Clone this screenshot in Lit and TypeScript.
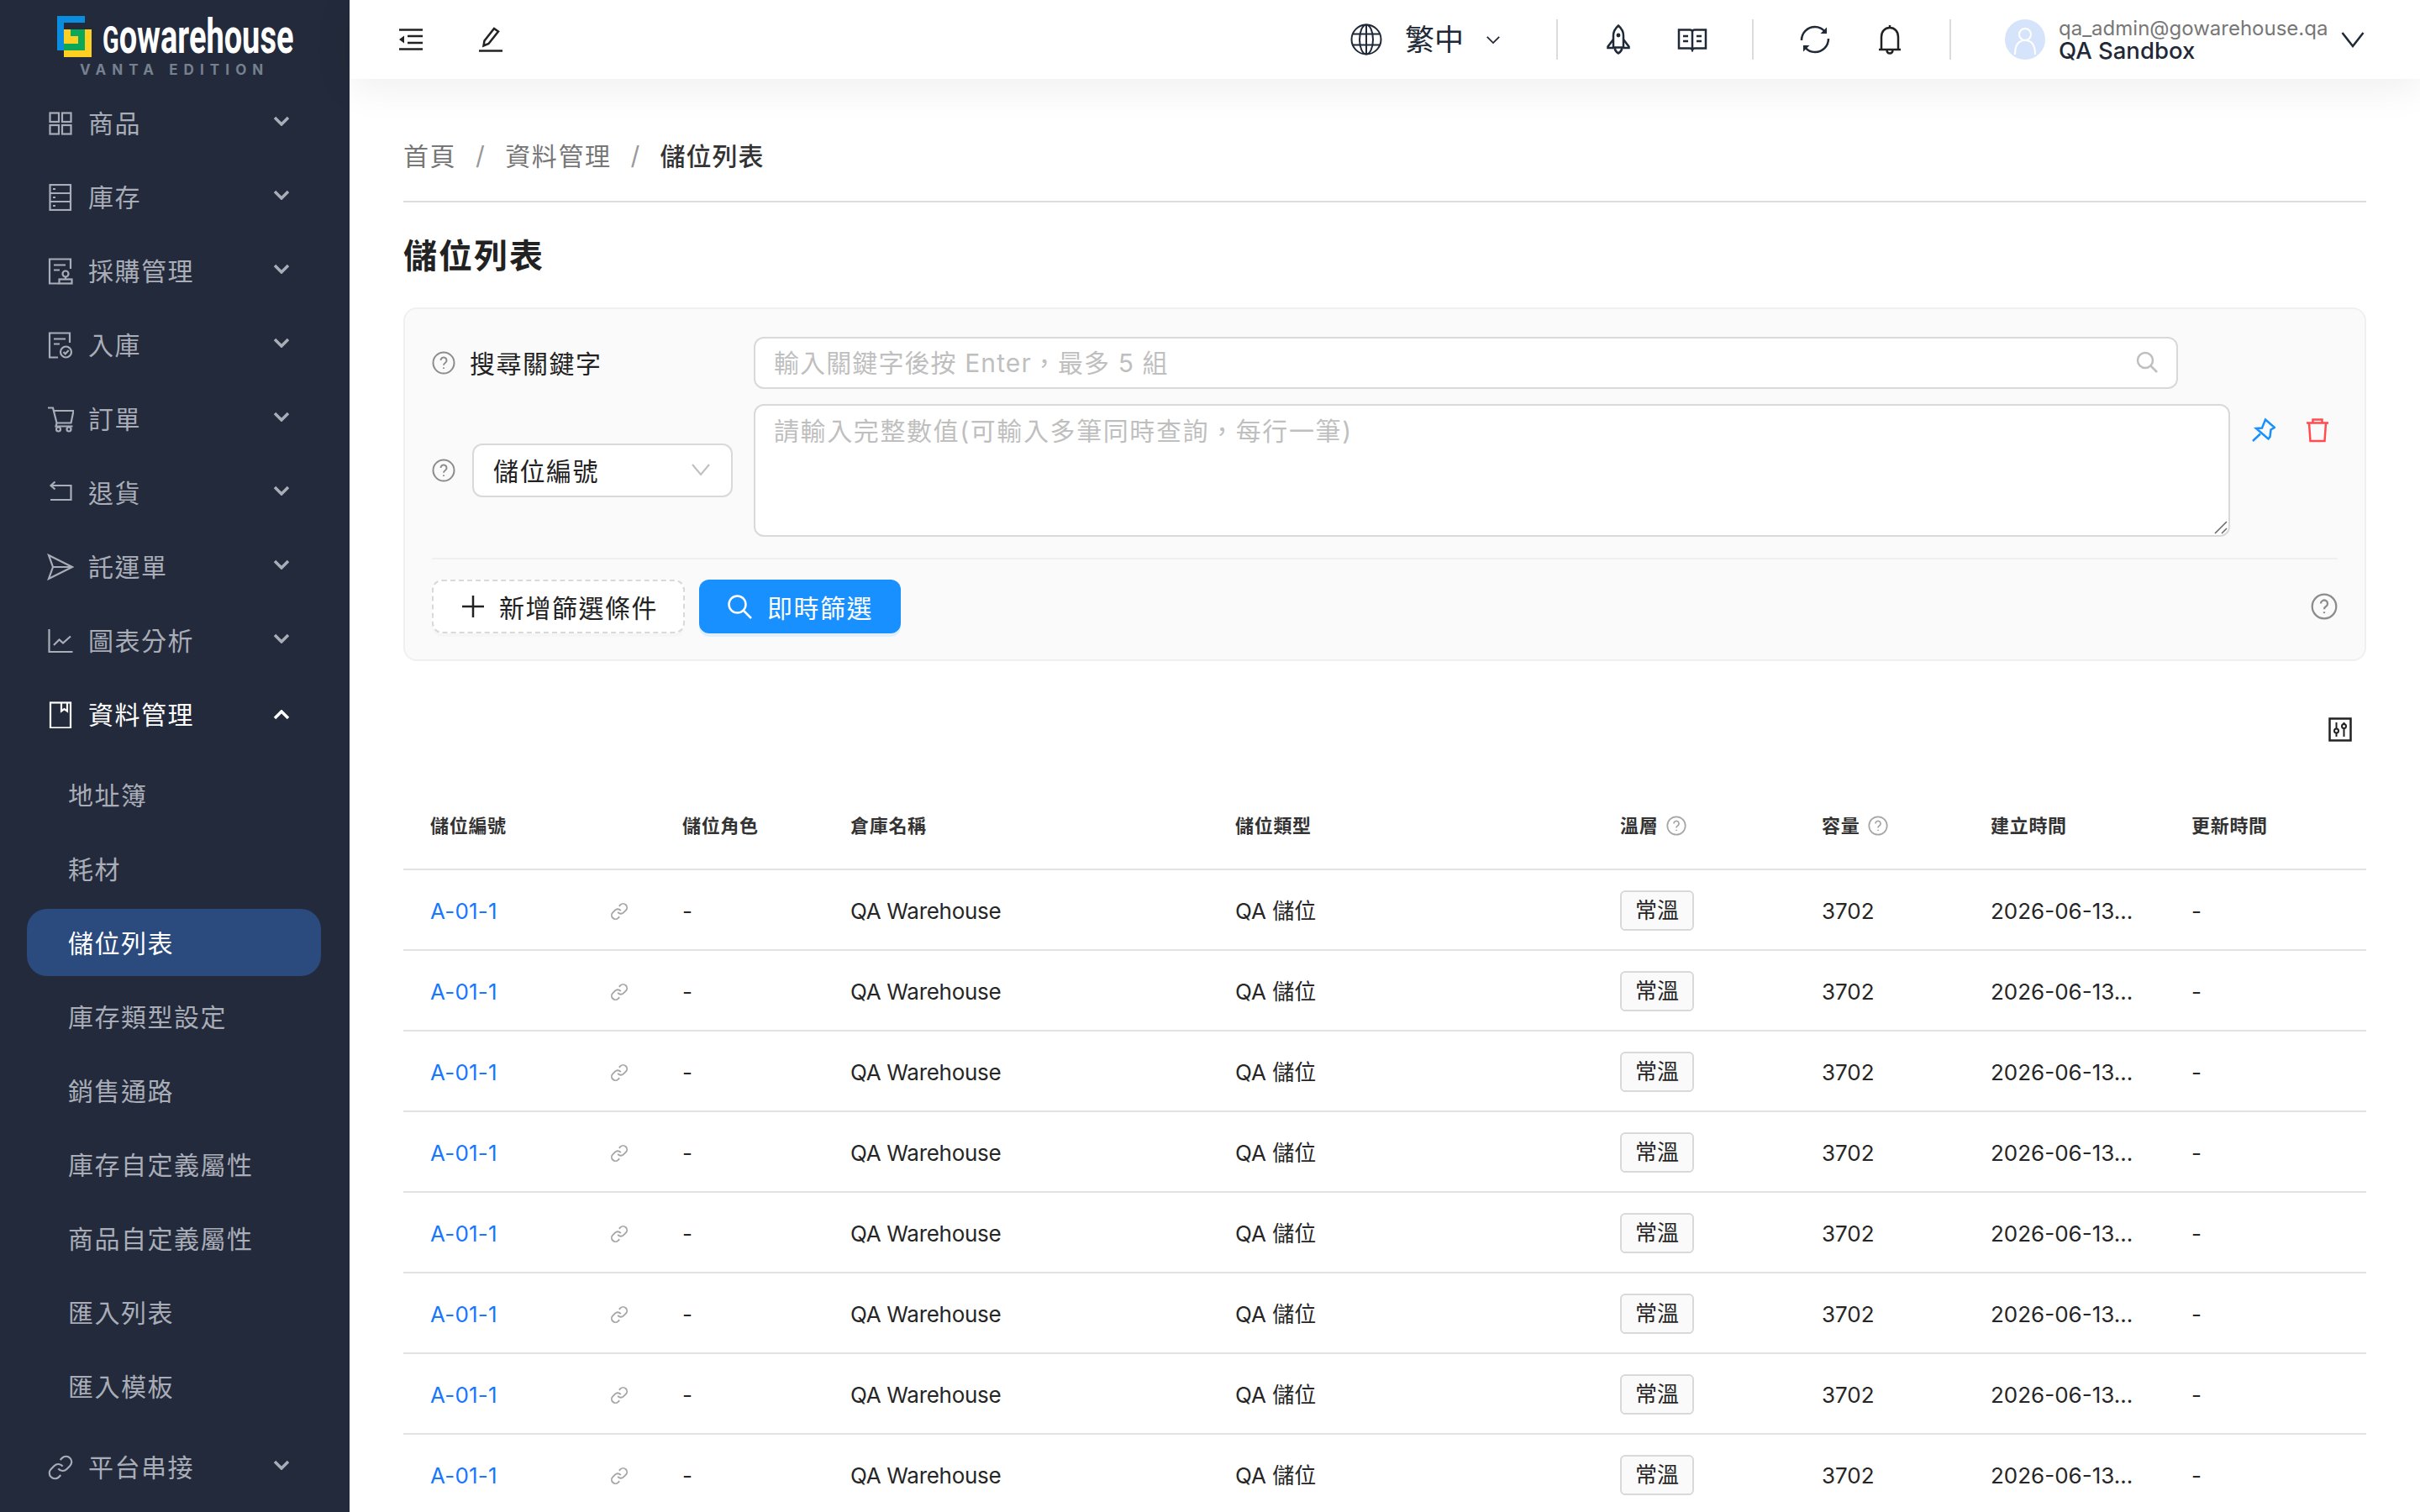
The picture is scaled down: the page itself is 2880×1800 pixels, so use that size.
import { LitElement, css, html, svg } from 'lit'
import { customElement } from 'lit/decorators.js'

// sidebar + header icons, all stroked with currentColor
const linkPaths = svg`<path d="M10 13a5 5 0 0 0 7.54.54l3-3a5 5 0 0 0-7.07-7.07l-1.72 1.71"/><path d="M14 11a5 5 0 0 0-7.54-.54l-3 3a5 5 0 0 0 7.07 7.07l1.71-1.71"/>`

const menuIcons: Record<string, unknown> = {
    grid: svg`<rect x="3.5" y="3.5" width="10.5" height="10.5"/><rect x="18" y="3.5" width="10.5" height="10.5"/><rect x="3.5" y="18" width="10.5" height="10.5"/><rect x="18" y="18" width="10.5" height="10.5"/>`,
    server: svg`<rect x="3.5" y="1" width="24.5" height="30"/><path d="M3.5 11h24.5M3.5 21h24.5M7 6h3M7 16h3M7 26h3"/>`,
    purchase: svg`<path d="M28 13V1.5H3v29h11M8 8.5h14M8 14.5h7"/><circle cx="22" cy="19" r="3.5"/><path d="M22 22.5v3"/><rect x="14.5" y="25.5" width="15" height="5"/>`,
    inbound: svg`<path d="M27 13V1.5H3v29h10M8 8.5h14M8 14.5h7"/><circle cx="22.5" cy="24" r="6.5"/><path d="M19.5 24l2.2 2.3 4-4.3"/>`,
    cart: svg`<path d="M1 2.5h6l4.5 18h17l3-14.5H8.5M11.5 20.5l-1 4h20"/><circle cx="13.5" cy="28" r="2.5"/><circle cx="26" cy="28" r="2.5"/>`,
    back: svg`<path d="M9.5 2.5L4.5 7l5 4.500M4.500 7h24v17H4"/>`,
    send: svg`<path d="M2 2l28 14L2 30l5-14zM7 16h23"/>`,
    chart: svg`<path d="M2.500 2v27h28M8 21l6.500-6.500 4.500 4 9-8"/>`,
    book: svg`<rect x="4" y="1.500" width="24" height="30"/><path d="M17 1.500v10l3.500-2.500 3.500 2.500v-10"/>`,
    link: svg`<g transform="scale(1.333)" stroke-width="1.600">${linkPaths}</g>`,
}

const help = html`<svg class="help" viewBox="0 0 28 28"><circle cx="14" cy="14" r="12.500"/><path d="M10.500 11a3.500 3.500 0 1 1 5.300 3c-1.100.7-1.800 1.400-1.800 2.800"/><path d="M14 19.500v1.600"/></svg>`
const chevDown = svg`<path d="M2 2l8 8 8-8"/>`

interface MenuItem { label: string; icon: string; open?: boolean; }

const menu: MenuItem[] = [
    { label: '商品', icon: 'grid' },
    { label: '庫存', icon: 'server' },
    { label: '採購管理', icon: 'purchase' },
    { label: '入庫', icon: 'inbound' },
    { label: '訂單', icon: 'cart' },
    { label: '退貨', icon: 'back' },
    { label: '託運單', icon: 'send' },
    { label: '圖表分析', icon: 'chart' },
    { label: '資料管理', icon: 'book', open: true },
    { label: '平台串接', icon: 'link' },
]

const subMenu = ['地址簿', '耗材', '儲位列表', '庫存類型設定', '銷售通路', '庫存自定義屬性', '商品自定義屬性', '匯入列表', '匯入模板']

const rows = [0, 1, 2, 3, 4, 5, 6, 7]

@customElement('app-root')
export class AppRoot extends LitElement {
    static styles = css`
        :host {
            display: grid;
            grid-template-columns: 416px 1fr;
            width: 2880px;
            height: 1800px;
            overflow: hidden;
            background: #fff;
            font-family: Inter, "Noto Sans CJK TC", sans-serif;
            color: #222;
        }

        svg {
            display: block;
            fill: none;
            stroke: currentColor;
            flex: none;
        }

        /* sidebar */
        .side {
            background: #232a3b;
            color: #a9adb7;
            font-size: 30px;
            letter-spacing: 1.5px;
            overflow: hidden;
        }
        .logo {
            height: 107px;
            box-sizing: border-box;
            padding: 19px 0 0 68px;
        }
        .logoRow {
            display: flex;
            gap: 13px;
        }
        .word {
            width: 226px;
            height: 49px;
            margin-top: 4px;
            color: #fff;
            font-family: Roboto, sans-serif;
            font-weight: 700;
            font-size: 58px;
            line-height: 40px;
            letter-spacing: 0;
            white-space: nowrap;
            transform: scaleX(0.655);
            transform-origin: left top;
        }
        .word span {
            font-size: 44px;
        }
        .edition {
            margin: 1px 0 0 27px;
            font-size: 17px;
            line-height: 20px;
            font-weight: 700;
            letter-spacing: 7.1px;
            color: #76818f;
            white-space: nowrap;
        }
        .item {
            display: flex;
            align-items: center;
            height: 80px;
            margin: 0 34px 8px 32px;
            padding: 0 37px 0 24px;
        }
        .item .ic {
            width: 32px;
            height: 32px;
            stroke-width: 2.200;
            margin-right: 17px;
        }
        .item .label { flex: 1; padding-bottom: 4px; }
        .item .chev {
            width: 20px;
            height: 12px;
            stroke-width: 3.500;
            margin-top: -6px;
        }
        .item.open { color: #fff; }
        .item.open .chev { transform: rotate(180deg); margin-top: 0; }
        .subs { margin-top: 15px; padding-bottom: 9px; }
        .sub {
            display: flex;
            align-items: center;
            box-sizing: border-box;
            height: 80px;
            margin: 0 34px 8px 32px;
            padding: 0 0 2px 49px;
            border-radius: 24px;
        }
        .sub.on { background: #2b4a7e; color: #fff; }

        /* top bar */
        .main { min-width: 0; }
        .top {
            display: flex;
            align-items: center;
            height: 94px;
            padding: 0 66px 0 58px;
            background: #fff;
            position: relative;
            box-shadow: 0 10px 48px rgba(0, 0, 0, 0.07);
            color: #1f2937;
        }
        .top .outdent { width: 30px; height: 28px; color: #222; }
        .top .pen { width: 30px; height: 30px; margin-left: 65px; color: #222; }
        .spacer { flex: 1; }
        .globe { width: 38px; height: 38px; stroke-width: 2; }
        .lang {
            margin-left: 27px;
            font-size: 35px;
            line-height: 48px;
        }
        .smallChev { width: 18px; height: 11px; margin-left: 26px; stroke-width: 2; }
        .sep {
            width: 2px;
            height: 48px;
            background: #dcdcdc;
        }
        .sep.a { margin-left: 66px; }
        .sep.b { margin-left: 53px; }
        .sep.c { margin-left: 57px; }
        .rocket { width: 30px; height: 36px; margin-left: 57px; stroke-width: 2.500; }
        .openbook { width: 36px; height: 30px; margin-left: 55px; stroke-width: 2.500; }
        .sync { width: 36px; height: 36px; margin-left: 55px; stroke-width: 2.500; }
        .bell { width: 28px; height: 36px; margin-left: 57px; stroke-width: 2.500; color: #222; }
        .avatar {
            width: 48px;
            height: 48px;
            margin-left: 64px;
            border-radius: 50%;
            background: #d6e4fb;
            color: #fff;
            stroke-width: 2;
        }
        .who { margin-left: 16px; width: 336px; }
        .email {
            font-size: 24px;
            line-height: 26px;
            color: #777;
            white-space: nowrap;
        }
        .name {
            font-size: 27.500px;
            line-height: 26px;
            font-weight: 500;
            color: #1f2937;
        }
        .bigChev { width: 28px; height: 20px; stroke-width: 2.500; }

        /* page */
        .content { padding: 64px 64px 0; }
        .crumbs {
            display: flex;
            align-items: center;
            height: 54px;
            padding-bottom: 27px;
            border-bottom: 2px solid #ddd;
            font-size: 30px;
            letter-spacing: 1.6px;
            color: #777;
        }
        .crumbs span, .crumbs b { padding-bottom: 2px; }
        .crumbs i {
            font-style: normal;
            color: #999;
            width: 58px;
            text-align: center;
        }
        .crumbs b { font-weight: 500; color: #333; letter-spacing: 1px; }
        h1 {
            margin: 36px 0 33px;
            font-size: 40px;
            line-height: 56px;
            letter-spacing: 2px;
            font-weight: 700;
            color: #222;
        }

        /* filter card */
        .card {
            height: 421px;
            box-sizing: border-box;
            padding: 33px 32px 0;
            border: 2px solid #f0f0f0;
            border-radius: 16px;
            background: #fafafa;
            font-size: 30px;
            letter-spacing: 1.5px;
        }
        .line {
            display: flex;
            align-items: center;
        }
        .left {
            display: flex;
            align-items: center;
            width: 383px;
            flex: none;
        }
        .help {
            width: 28px;
            height: 28px;
            color: #8c8c8c;
            stroke-width: 2;
        }
        .left .kw { margin-left: 17px; padding-bottom: 2px; }
        input, textarea {
            box-sizing: border-box;
            border: 2px solid #d9d9d9;
            background: #fff;
            font: inherit;
            color: #222;
            outline: none;
        }
        input::placeholder, textarea::placeholder { color: #bfbfbf; opacity: 1; }
        .searchBox {
            position: relative;
            width: 1695px;
            height: 62px;
        }
        .searchBox input {
            width: 100%;
            height: 100%;
            padding: 0 60px 0 22px;
            border-radius: 12px;
            letter-spacing: 1.1px;
        }
        .searchBox svg {
            position: absolute;
            right: 24px;
            top: 17px;
            width: 26px;
            height: 26px;
            color: #bfbfbf;
            stroke-width: 2.500;
        }
        .line.two { margin-top: 18px; }
        .pick {
            display: flex;
            align-items: center;
            justify-content: space-between;
            box-sizing: border-box;
            width: 310px;
            height: 64px;
            margin-left: 20px;
            padding: 0 24px 2px 23px;
            border: 2px solid #d9d9d9;
            border-radius: 12px;
            background: #fff;
        }
        .pick svg { width: 24px; height: 16px; color: #bfbfbf; stroke-width: 2; }
        .taBox {
            position: relative;
            width: 1757px;
            height: 158px;
        }
        textarea {
            display: block;
            width: 100%;
            height: 100%;
            padding: 12px 22px;
            border-radius: 12px;
            line-height: 36px;
            letter-spacing: 1.6px;
            resize: none;
        }
        .grip {
            position: absolute;
            right: 3px;
            bottom: 3px;
            width: 16px;
            height: 16px;
            color: #666;
            stroke-width: 1.500;
        }
        .acts {
            align-self: flex-start;
            display: flex;
            gap: 36px;
            margin: 16px 0 0 26px;
        }
        .pin { width: 28px; height: 30px; color: #1890ff; stroke-width: 2.500; }
        .trash { width: 28px; height: 30px; color: #ff4d4f; stroke-width: 2.500; }
        .rule {
            height: 2px;
            margin: 25px 0 24px;
            background: #f0f0f0;
        }
        .btns {
            display: flex;
            align-items: center;
            gap: 17px;
        }
        .btn {
            display: flex;
            align-items: center;
            box-sizing: border-box;
            height: 64px;
            padding-bottom: 1px;
            border-radius: 12px;
        }
        .btn.add {
            width: 301px;
            padding-left: 33px;
            border: 2px dashed #d9d9d9;
            background: #fff;
            box-shadow: 0 4px 0 rgba(0, 0, 0, 0.015);
        }
        .btn.add svg { width: 28px; height: 28px; margin-right: 17px; stroke-width: 2.500; }
        .btn.go {
            width: 240px;
            padding-left: 33px;
            background: #1890ff;
            color: #fff;
            box-shadow: 0 4px 0 rgba(5, 145, 255, 0.1);
        }
        .btn.go svg { width: 30px; height: 30px; margin-right: 18px; stroke-width: 2.500; }
        .helpBig { width: 32px; height: 32px; margin-left: auto; }

        /* table */
        .tools {
            display: flex;
            justify-content: flex-end;
            height: 145px;
            box-sizing: border-box;
            padding: 67px 17px 0 0;
        }
        .tools svg { width: 28px; height: 29px; color: #222; stroke-width: 2.500; }
        .row {
            display: grid;
            grid-template-columns: 300px 200px 458px 458px 240px 201px 239px 240px;
            align-items: center;
            box-sizing: border-box;
            border-bottom: 2px solid #e2e2e2;
            height: 96px;
            font-size: 26px;
            line-height: 30px;
            color: #262626;
        }
        .row > div {
            display: flex;
            align-items: center;
            padding: 3px 0 0 32px;
            white-space: pre;
        }
        .row > div.tagCell { padding-top: 1px; }
        .row.head {
            height: 104px;
            font-size: 22px;
            letter-spacing: 0.7px;
            font-weight: 600;
            color: #333;
        }
        .row.head > div { padding: 0 0 1px 32px; }
        .row .first { justify-content: space-between; padding-right: 32px !important; }
        .code { color: #1677ff; letter-spacing: 0.200px; }
        .wh { letter-spacing: -0.300px; }
        .chain { width: 22px; height: 22px; color: #a6a6a6; stroke-width: 2; }
        .tag {
            display: flex;
            align-items: center;
            justify-content: center;
            box-sizing: border-box;
            width: 88px;
            height: 48px;
            border: 2px solid #d9d9d9;
            border-radius: 6px;
            background: #fafafa;
        }
        .head .help { width: 24px; height: 24px; margin-left: 10px; color: #a6a6a6; stroke-width: 2; }
    `;

    private menuItem(m: MenuItem) {
        return html`<div class="item ${m.open ? 'open' : ''}">
            <svg class="ic" viewBox="0 0 32 32">${menuIcons[m.icon]}</svg>
            <span class="label">${m.label}</span>
            <svg class="chev" viewBox="0 0 20 12">${chevDown}</svg>
        </div>`;
    }

    private sidebar() {
        return html`<aside class="side">
            <div class="logo">
                <div class="logoRow">
                    <svg width="41" height="49" viewBox="0 0 41 49" style="stroke:none">
                        <path fill="#0a8ddf" d="M0 0h33v8H8v33H0z"/>
                        <path fill="#fdd023" d="M8 16h33v33H8z"/>
                        <path fill="#0aa858" d="M16 16h17v25H8v-8h17V24h-9z"/>
                        <path fill="#fdd023" d="M8 16h8v8h9v9H8z"/>
                    </svg>
                    <div class="word"><span>G</span>owarehouse</div>
                </div>
                <div class="edition">VANTA EDITION</div>
            </div>
            ${menu.map(m => html`
                ${this.menuItem(m)}
                ${m.open ? html`<div class="subs">${subMenu.map(s => html`<div class="sub ${s == '儲位列表' ? 'on' : ''}">${s}</div>`)}</div>` : ''}
            `)}
        </aside>`;
    }

    private topbar() {
        return html`<header class="top">
            <svg class="outdent" viewBox="0 0 30 28" stroke-width="2.500"><path d="M1 2.500h28M1 25.500h28M11 10h18M11 18h18"/><path d="M7 9.500v9l-6-4.500z" fill="currentColor" stroke="none"/></svg>
            <svg class="pen" viewBox="0 0 30 30" stroke-width="2.500"><path d="M1 28.500h28"/><path d="M6.500 22.500l1-6L19 2l5 3.500-11.500 14.500z"/></svg>
            <div class="spacer"></div>
            <svg class="globe" viewBox="0 0 38 38"><circle cx="19" cy="19" r="17.500"/><ellipse cx="19" cy="19" rx="8" ry="17.500"/><path d="M19 1.500v35M2 12.500h34M2 25.500h34"/></svg>
            <span class="lang">繁中</span>
            <svg class="smallChev" viewBox="0 0 20 12">${chevDown}</svg>
            <div class="sep a"></div>
            <svg class="rocket" viewBox="0 0 30 36"><path d="M15 1.500c4 3.500 6 7 6 12v14H9v-14c0-5 2-8.500 6-12z"/><path d="M9 18l-6.500 8.500v1.500H9M21 18l6.500 8.500v1.500H21M10.500 28c.5 3 2 5 4.500 6.500 2.500-1.500 4-3.500 4.500-6.500"/><circle cx="15" cy="13" r="1.200" fill="currentColor"/></svg>
            <svg class="openbook" viewBox="0 0 36 30"><path d="M2 3.500h13c1.800 0 3 1 3 2.500 0-1.500 1.200-2.500 3-2.500h13v22H21c-1.500 0-2.500.7-3 2-.5-1.300-1.500-2-3-2H2zM18 6v21M7 11h6M7 17h6M23 11h6M23 17h6"/></svg>
            <div class="sep b"></div>
            <svg class="sync" viewBox="0 0 36 36"><path d="M2 19C2 10 9 3 18 3c5 0 9 2 12 6M34 17c0 9-7 16-16 16-5 0-9-2-12-6"/><path d="M32 3.500V11h-7.500z" fill="currentColor" stroke="none"/><path d="M4 32.500V25h7.500z" fill="currentColor" stroke="none"/></svg>
            <svg class="bell" viewBox="0 0 28 36"><path d="M1 30h26M4 30V15C4 8.500 8 4 14 4s10 4.500 10 11v15M14 1v3M10.500 30c0 3 1.500 4.500 3.500 4.500s3.500-1.500 3.500-4.500"/></svg>
            <div class="sep c"></div>
            <svg class="avatar" viewBox="0 0 48 48"><circle cx="24" cy="18" r="7"/><path d="M12 42c0-12 4-17 12-17s12 5 12 17"/></svg>
            <div class="who">
                <div class="email">qa_admin@gowarehouse.qa</div>
                <div class="name">QA Sandbox</div>
            </div>
            <svg class="bigChev" viewBox="0 0 28 20"><path d="M1.500 2L14 18 26.500 2"/></svg>
        </header>`;
    }

    private filterCard() {
        return html`<section class="card">
            <div class="line">
                <div class="left">${help}<span class="kw">搜尋關鍵字</span></div>
                <div class="searchBox">
                    <input placeholder="輸入關鍵字後按 Enter，最多 5 組" />
                    <svg viewBox="0 0 26 26"><circle cx="11" cy="11" r="9"/><path d="M17.500 17.500l7.500 7.500"/></svg>
                </div>
            </div>
            <div class="line two">
                <div class="left">${help}
                    <div class="pick">儲位編號<svg viewBox="0 0 24 16"><path d="M2 2l10 12L22 2"/></svg></div>
                </div>
                <div class="taBox">
                    <textarea placeholder="請輸入完整數值(可輸入多筆同時查詢，每行一筆)"></textarea>
                    <svg class="grip" viewBox="0 0 16 16"><path d="M1 15L15 1M9 15l6-6"/></svg>
                </div>
                <div class="acts">
                    <svg class="pin" viewBox="0 0 28 30"><path d="M1 28l9-8.500M16 2.500l11 9.500-4.500 2.500-1 8.500-2 2.500L5 13l7-.5z"/></svg>
                    <svg class="trash" viewBox="0 0 28 30"><path d="M1 6.500h26M4 6.500l1.500 21.500h17L24 6.500M8.500 6.500V2.500h11v4"/></svg>
                </div>
            </div>
            <div class="rule"></div>
            <div class="btns">
                <div class="btn add"><svg viewBox="0 0 28 28"><path d="M14 1v26M1 14h26"/></svg>新增篩選條件</div>
                <div class="btn go"><svg viewBox="0 0 30 30"><circle cx="12.500" cy="12.500" r="10"/><path d="M20 20l9 9"/></svg>即時篩選</div>
                <svg class="help helpBig" viewBox="0 0 28 28"><circle cx="14" cy="14" r="12.500"/><path d="M10.500 11a3.500 3.500 0 1 1 5.300 3c-1.100.7-1.800 1.400-1.800 2.800"/><path d="M14 19.500v1.600"/></svg>
            </div>
        </section>`;
    }

    private table() {
        return html`
            <div class="tools">
                <svg viewBox="0 0 28 29"><rect x="1.500" y="1.500" width="25" height="26"/><path d="M9.500 6v7M9.500 19v4M18.500 6v2M18.500 13v10" stroke-width="2"/><circle cx="9.500" cy="16" r="2.500" stroke-width="2"/><circle cx="18.500" cy="10.500" r="2.500" stroke-width="2"/></svg>
            </div>
            <div class="row head">
                <div>儲位編號</div><div>儲位角色</div><div>倉庫名稱</div><div>儲位類型</div>
                <div>溫層${help}</div><div>容量${help}</div><div>建立時間</div><div>更新時間</div>
            </div>
            ${rows.map(() => html`<div class="row">
                <div class="first"><span class="code">A-01-1</span><svg class="chain" viewBox="0 0 24 24">${linkPaths}</svg></div>
                <div>-</div>
                <div class="wh">QA Warehouse</div>
                <div>QA 儲位</div>
                <div class="tagCell"><span class="tag">常溫</span></div>
                <div>3702</div>
                <div>2026-06-13...</div>
                <div>-</div>
            </div>`)}
        `;
    }

    render() {
        return html`
            ${this.sidebar()}
            <div class="main">
                ${this.topbar()}
                <main class="content">
                    <nav class="crumbs"><span>首頁</span><i>/</i><span>資料管理</span><i>/</i><b>儲位列表</b></nav>
                    <h1>儲位列表</h1>
                    ${this.filterCard()}
                    ${this.table()}
                </main>
            </div>
        `;
    }
}

declare global {
    interface HTMLElementTagNameMap {
        'app-root': AppRoot
    }
}
